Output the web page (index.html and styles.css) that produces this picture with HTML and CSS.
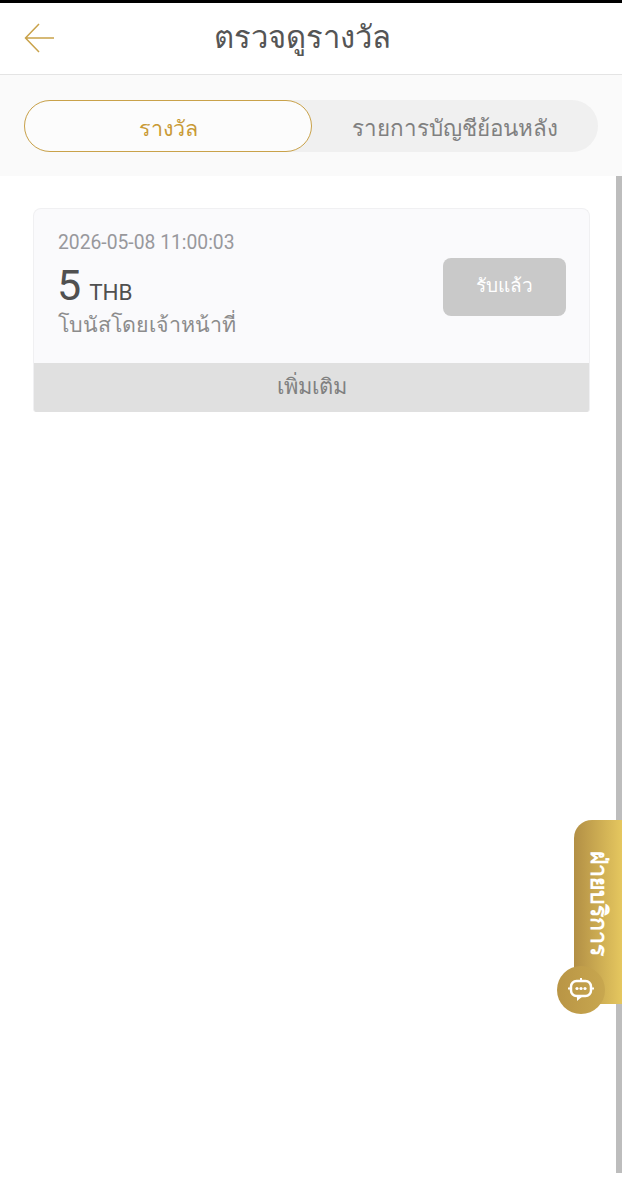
FILE: index.html
```html
<!DOCTYPE html>
<html lang="th">
<head>
    <meta charset="UTF-8">
    <meta name="viewport" content="width=device-width, initial-scale=1.0">
    <title>ตรวจดูรางวัล</title>
    <link rel="stylesheet" href="styles.css">
</head>
<body>
    <div class="header">
        <svg class="back" width="32" height="30" viewBox="0 0 32 30">
            <path d="M30 15H2M15 1L1.500 15L15 29" fill="none" stroke="#c9a24a" stroke-width="1.500"/>
        </svg>
        <h1 class="title">ตรวจดูรางวัล</h1>
    </div>

    <div class="tabs-bar">
        <div class="tabs">
            <div class="tab tab-active">รางวัล</div>
            <div class="tab">รายการบัญชีย้อนหลัง</div>
        </div>
    </div>

    <div class="content">
        <div class="card">
            <div class="card-body">
                <div class="card-info">
                    <div class="date">2026-05-08 11:00:03</div>
                    <div class="amount"><span class="num">5</span> <span class="unit">THB</span></div>
                    <div class="desc">โบนัสโดยเจ้าหน้าที่</div>
                </div>
                <div class="claimed">รับแล้ว</div>
            </div>
            <div class="more">เพิ่มเติม</div>
        </div>
    </div>

    <div class="scrollbar"></div>

    <div class="service">
        <span class="service-text">ฝ่ายบริการ</span>
    </div>
    <div class="service-icon">
        <svg width="28" height="24" viewBox="0 0 28 24">
            <rect x="4" y="3" width="20" height="15" rx="5.500" fill="none" stroke="#fff" stroke-width="2.500"/>
            <path d="M10 17v6l6-5z" fill="#fff"/>
            <path d="M14 0v3M1 10.500h3M24 10.500h3" stroke="#fff" stroke-width="2"/>
            <circle cx="10" cy="10.500" r="1.600" fill="#fff"/>
            <circle cx="14" cy="10.500" r="1.600" fill="#fff"/>
            <circle cx="18" cy="10.500" r="1.600" fill="#fff"/>
        </svg>
    </div>
</body>
</html>
```

FILE: styles.css
```css
html, body {
    height: 1200px;
    overflow: hidden;
}
body {
    font-family: Roboto, "Noto Sans", "Liberation Sans", sans-serif;
    background-color: white;
    margin: 0;
    padding: 0;
    position: relative;
}
.header {
    height: 71px;
    border-top: 3px solid black;
    border-bottom: 1px solid #e4e4e4;
    display: flex;
    align-items: center;
    padding-left: 24px;
}
.back {
    flex: none;
    margin-top: -1px;
}
.title {
    margin: -3px 0 0 158px;
    font-size: 31px;
    font-weight: normal;
    color: #555;
}
.tabs-bar {
    background-color: #fafafa;
    height: 101px;
    padding: 25px 24px 0;
    box-sizing: border-box;
}
.tabs {
    display: flex;
    height: 52px;
    width: 574px;
    border-radius: 26px;
    background-color: #f0f0f0;
}
.tab {
    flex: 1;
    display: flex;
    justify-content: center;
    align-items: center;
    font-size: 22.400px;
    color: #808080;
    padding-top: 3px;
    box-sizing: border-box;
}
.tab-active {
    flex: none;
    width: 288px;
    background-color: #fcfcfc;
    border: 1px solid #c9a24a;
    border-radius: 26px;
    color: #c99a36;
    font-size: 21.500px;
}
.content {
    padding: 32px 32px 0 33px;
}
.card {
    width: 557px;
    border: 1px solid #f0f0f2;
    border-bottom: none;
    box-sizing: border-box;
    border-radius: 8px 8px 3px 3px;
    background-color: #fafafc;
    overflow: hidden;
}
.card-body {
    height: 154px;
    display: flex;
    justify-content: space-between;
    align-items: center;
    padding: 0 23px 0 24px;
}
.card-info {
    align-self: flex-start;
    padding-top: 22px;
}
.date {
    font-size: 19.300px;
    line-height: 24px;
    color: #98989c;
}
.amount {
    line-height: 48px;
    color: #505050;
    margin-top: 6px;
    margin-left: -1px;
}
.num {
    font-size: 43px;
    margin-right: 4px;
}
.unit {
    font-size: 22.500px;
}
.desc {
    font-size: 21.400px;
    line-height: 28px;
    color: #8c8c8c;
    margin-top: -8px;
}
.claimed {
    width: 123px;
    height: 58px;
    border-radius: 8px;
    background-color: #c9c9c9;
    color: white;
    font-size: 19px;
    display: flex;
    justify-content: center;
    align-items: center;
    margin-top: 1px;
    padding-bottom: 3px;
    box-sizing: border-box;
}
.more {
    height: 49px;
    background-color: #e0e0e0;
    color: #808080;
    font-size: 21.800px;
    display: flex;
    justify-content: center;
    align-items: center;
    padding-bottom: 3px;
    box-sizing: border-box;
}
.scrollbar {
    position: absolute;
    top: 176px;
    right: 0;
    width: 6px;
    height: 997px;
    background-color: #bdbdbd;
}
.service {
    position: absolute;
    top: 820px;
    right: 0;
    width: 48px;
    height: 184px;
    border-radius: 18px 0 0 18px;
    background: linear-gradient(90deg, #b28f45, #e5c75f);
    display: flex;
    justify-content: center;
    padding-top: 31px;
    box-sizing: border-box;
}
.service-text {
    writing-mode: vertical-rl;
    color: white;
    font-size: 23px;
    font-weight: bold;
    line-height: 26px;
}
.service-icon {
    position: absolute;
    top: 966px;
    left: 557px;
    width: 48px;
    height: 48px;
    border-radius: 50%;
    background: linear-gradient(90deg, #b99545, #c8a74f);
    display: flex;
    justify-content: center;
    align-items: center;
}
```
